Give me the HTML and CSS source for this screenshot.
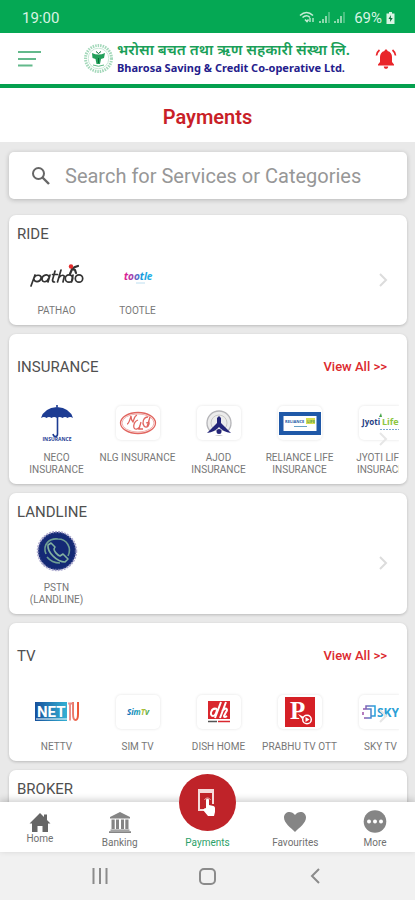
FILE: index.html
```html
<!DOCTYPE html>
<html lang="en">
<head>
<meta charset="utf-8">
<meta name="viewport" content="width=device-width, initial-scale=1">
<title>Payments</title>
<link rel="stylesheet" href="styles.css">
</head>
<body>
<div class="status">
  <span class="clock">19:00</span>
  <span class="status-right">
    <svg width="16" height="13" viewBox="0 0 16 13" fill="none" stroke="#c6edd6" stroke-width="1.6"><path d="M1 4.5Q7.500-1.500 14 4.500M3.500 6.500Q7.500 3 11 6.500M6 8.500L8 10.500 9.500 8.500"/><path d="M11 11V7M14 7v4" stroke-width="1.3"/></svg>
    <svg width="11" height="11" viewBox="0 0 11 11" fill="#8cd8ac"><path d="M0 9h2v2H0zM3 7h2v4H3zM6 4h2v7H6zM9.500 0h1v11h-1z"/></svg>
    <svg width="11" height="11" viewBox="0 0 11 11" fill="#8cd8ac"><path d="M0 9h2v2H0zM3 7h2v4H3zM6 4h2v7H6zM9.500 0h1v11h-1z"/></svg>
    <span class="battery">69%</span>
    <svg width="9" height="12" viewBox="0 0 9 12"><path fill="#d8f4e3" d="M3 0h3v1.500h2.500V12H.5V1.500H3z"/><path fill="#08743c" d="M5 3L2.500 7h1.700L4 10l2.700-4H4.800z"/></svg>
  </span>
</div>
<header class="header">
  <button class="icon-button" aria-label="Menu">
    <svg width="23" height="18" viewBox="0 0 23 18" stroke="#63b98b" stroke-width="2"><path d="M0 2h23M0 9h18M0 15.500h14.500"/></svg>
  </button>
  <div class="brand">
    <svg width="31" height="31" viewBox="0 0 31 31" fill="none">
      <circle cx="15.500" cy="15.500" r="13" stroke="#a3d8ba" stroke-width="3" stroke-dasharray="1.500 1"/>
      <circle cx="15.500" cy="15.500" r="10.300" stroke="#b9e1ca" stroke-width=".8"/>
      <path d="M9 10q6.500 3 13 0l-1 5-3 1-1 5h-3.500l-1-5-3-1z" fill="#229f5a"/>
      <path d="M13 8.500l2.500 2 2.500-2M15.500 15v5" stroke="#086b35"/>
      <path d="M10 22q5.500 2.500 11 0" stroke="#5cb985"/>
    </svg>
    <div class="brand-text">
      <span class="brand-np" lang="ne">भरोसा बचत तथा ऋण सहकारी संस्था लि.</span>
      <span class="brand-en">Bharosa Saving &amp; Credit Co-operative Ltd.</span>
    </div>
  </div>
  <button class="icon-button" aria-label="Notifications">
    <svg width="22" height="22" viewBox="0 0 22 22" fill="#e9252a"><path d="M11 1.500c1 0 1.500.7 1.500 1.500 3 .8 4.500 3 4.500 6v5l2 2.500v1H3v-1L5 14V9c0-3 1.500-5.200 4.500-6 0-.8.5-1.500 1.500-1.500zM8.800 18.500h4.400c0 1.500-1 2.300-2.200 2.300s-2.200-.8-2.200-2.300z"/><path d="M4.500 2Q2 4 1.500 7.500M17.500 2Q20 4 20.500 7.500" fill="none" stroke="#e9252a" stroke-width="1.700"/></svg>
  </button>
</header>
<h1 class="page-title">Payments</h1>
<main class="content">
  <label class="search">
    <svg width="20" height="20" viewBox="0 0 20 20" fill="none" stroke="#666" stroke-width="2"><circle cx="7.500" cy="7.500" r="5.500"/><path d="M11.500 11.500l6.500 6.500" stroke-width="2.400"/></svg>
    <input type="search" placeholder="Search for Services or Categories" aria-label="Search for Services or Categories">
  </label>

  <section class="card compact">
    <div class="card-head"><h2>RIDE</h2></div>
    <div class="services">
      <a class="service" href="#"><span class="logo">
        <svg width="54" height="26" viewBox="0 0 54 26" fill="none" stroke="#333" stroke-width="1.700" stroke-linecap="round"><path d="M1 23L5 12M4 15c1.500-4 8-3.500 7 .5s-7 4-7 .5M20 12l-2 7M19 14c-1-3.500-7-2-7 2s5 3.500 6.500-.5M25 8l-2.500 9q0 2 2 2M22.500 11.500h5M31 7l-3.500 12M29 14.500c2-3 6-3 5 0L33 19M43 12l-1.500 7"/><circle cx="39" cy="15.500" r="3.700"/><circle cx="49" cy="15.500" r="3.700"/><path d="M40 11l2-5 3 1 1 3M42 6l3-2 3-1" stroke-width="2.200"/><circle cx="41" cy="3.500" r="2.200" fill="#e32b2b" stroke="none"/></svg>
      </span><span class="name">PATHAO</span></a>
      <a class="service" href="#"><span class="logo">
        <svg width="34" height="18" viewBox="0 0 34 18"><defs><linearGradient id="tootle"><stop stop-color="#ec168c"/><stop offset=".35" stop-color="#8b4bb8"/><stop offset=".6" stop-color="#1897db"/><stop offset="1" stop-color="#28b3e8"/></linearGradient></defs><text x="3" y="13" class="mark tootle" fill="url(#tootle)">tootle</text><path d="M15 16h9" stroke="#bedff0"/></svg>
      </span><span class="name">TOOTLE</span></a>
    </div>
    <svg class="chevron" width="10" height="14" viewBox="0 0 10 14"><path d="M2 1l6 6-6 6"/></svg>
  </section>

  <section class="card">
    <div class="card-head"><h2>INSURANCE</h2><a class="view-all" href="#">View All &gt;&gt;</a></div>
    <div class="services">
      <a class="service" href="#"><span class="logo">
        <svg width="34" height="38" viewBox="0 0 34 38"><path fill="#1d3c93" d="M1 14Q4 4 17 3q13 1 16 11-3-2-5.500 0-2.500-2-5 0-3-2-5.500 0-3-2-5.500 0-2.500-2-5 0Q4 12 1 14z"/><path d="M17 3V1M17.500 13v17q0 2.500-2 2.500T13 30" fill="none" stroke="#1d3c93" stroke-width="1.600"/><text x="17" y="37" text-anchor="middle" class="mark neco">INSURANCE</text></svg>
      </span><span class="name">NECO INSURANCE</span></a>
      <a class="service" href="#"><span class="logo tile">
        <svg width="38" height="24" viewBox="0 0 38 24" fill="none" stroke="#e16660" stroke-width="1.300"><ellipse cx="19" cy="12" rx="17.500" ry="10.500"/><ellipse cx="19" cy="12" rx="16" ry="9" stroke-width=".5"/><path d="M8 13c2 0 3-5 4-8 0 3 1 5 2 6 1-2 1-6 4-7M19 9c-5 2-6 10-1 9q3-1 3-4M22 11l-2 7h4M29 6c-5 0-6 6-4 9 3 3 6-1 5-4l-3 1M31 6l-3 10"/></svg>
      </span><span class="name">NLG INSURANCE</span></a>
      <a class="service" href="#"><span class="logo tile">
        <svg width="30" height="28" viewBox="0 0 30 28"><circle cx="15" cy="14" r="12" fill="#ececec" stroke="#b4b4b8" stroke-width="1.300"/><circle cx="15" cy="14" r="8" fill="none" stroke="#c8c8c8"/><path d="M2 26h26l-4-4H6z" fill="#fff"/><path d="M3 24L13 14V9l2-2 2 2v5l10 10q-8-1-12-6-4 5-12 6z" fill="#232578"/><circle cx="15" cy="22.500" r="2.500" fill="#232578"/></svg>
      </span><span class="name">AJOD INSURANCE</span></a>
      <a class="service" href="#"><span class="logo tile">
        <svg width="42" height="23" viewBox="0 0 42 23"><path fill="#2059a8" d="M0 0h42v23H0z"/><path fill="#fff" d="M4.500 4h33v15h-33z"/><path fill="#d8df4f" d="M27 6h9v6h-9z"/><text x="6" y="11" class="mark reliance">RELIANCE</text><text x="28" y="11" class="mark reliance life">LIFE</text><path d="M15 14.500h13" stroke="#65a0c5"/></svg>
      </span><span class="name">RELIANCE LIFE INSURANCE</span></a>
      <a class="service" href="#"><span class="logo tile">
        <svg width="40" height="20" viewBox="0 0 40 20"><text x="1" y="12" class="mark jyoti">Jyoti</text><text x="21" y="12" class="mark jyoti-life">Life</text><path d="M18 4l2-4 1 4z" fill="#46a548"/><path d="M19 16.500h19" stroke="#7aa7cd" stroke-dasharray="2 1"/></svg>
      </span><span class="name cut">JYOTI LIFE INSURACE</span></a>
    </div>
    <svg class="chevron faint" width="10" height="14" viewBox="0 0 10 14"><path d="M2 1l6 6-6 6"/></svg>
  </section>

  <section class="card compact landline">
    <div class="card-head"><h2>LANDLINE</h2></div>
    <div class="services">
      <a class="service" href="#"><span class="logo">
        <svg width="42" height="42" viewBox="0 0 42 42" fill="none"><circle cx="21" cy="21" r="19" fill="#142975" stroke="#aaa7cc" stroke-width="2.500" stroke-dasharray="2 1"/><circle cx="21" cy="21" r="18" stroke="#142975"/><path d="M10 24C6 14 14 8 22 9c9 0 14 9 10 17M11 27c4 5 8 6 13 6" stroke="#6e9e92" stroke-width="1.600"/><path d="M15 13l-3 2c-1 7 9 17 17 17l3-3-5-5-3 2c-3-1-6-5-6-7l1-2z" stroke="#82b1a0" stroke-width="1.600" stroke-linejoin="round"/></svg>
      </span><span class="name">PSTN (LANDLINE)</span></a>
    </div>
    <svg class="chevron" width="10" height="14" viewBox="0 0 10 14"><path d="M2 1l6 6-6 6"/></svg>
  </section>

  <section class="card">
    <div class="card-head"><h2>TV</h2><a class="view-all" href="#">View All &gt;&gt;</a></div>
    <div class="services">
      <a class="service" href="#"><span class="logo">
        <svg width="44" height="20" viewBox="0 0 44 20"><defs><linearGradient id="net"><stop stop-color="#17519c"/><stop offset="1" stop-color="#34b1d4"/></linearGradient><linearGradient id="tv"><stop stop-color="#e9a3a8"/><stop offset="1" stop-color="#ec5636"/></linearGradient></defs><path fill="url(#net)" d="M0 0h32v19H0z"/><path fill="#fff" d="M1 16.500h31v1H1z"/><text x="2" y="15" class="mark net">NET</text><path d="M33 1.500h5M35 1.500v17M38 0v12q0 6 2.500 6 2.500 0 2.500-6V0" fill="none" stroke="url(#tv)" stroke-width="2"/></svg>
      </span><span class="name">NETTV</span></a>
      <a class="service" href="#"><span class="logo tile">
        <svg width="24" height="12" viewBox="0 0 24 12"><defs><linearGradient id="sim"><stop stop-color="#1569b5"/><stop offset=".5" stop-color="#16a0bb"/><stop offset=".7" stop-color="#c0c12a"/><stop offset="1" stop-color="#159b67"/></linearGradient></defs><text x="1" y="9" class="mark sim" fill="url(#sim)">SimTv</text></svg>
      </span><span class="name">SIM TV</span></a>
      <a class="service" href="#"><span class="logo tile">
        <svg width="24" height="24" viewBox="0 0 24 24"><path fill="#d9272e" d="M1 1h22v18H1z"/><path d="M14 2L8 18M10 9c-6-2-8 7-4 7 2 0 4-4 4-7M19 2l-6 16M15 11c5-5 6-1 4 1l-2 4q0 2 3 0" fill="none" stroke="#fff" stroke-width="2"/><path d="M1 21.500h9" stroke="#555" stroke-width="1.500"/><path d="M11 21.500h12" stroke="#d9272e" stroke-width="1.500"/></svg>
      </span><span class="name">DISH HOME</span></a>
      <a class="service" href="#"><span class="logo tile">
        <svg width="30" height="30" viewBox="0 0 30 30"><path fill="#d52026" d="M0 0h30v30H0z"/><text x="5" y="22" class="mark prabhu">P</text><circle cx="22" cy="22.500" r="4.300" fill="#d52026" stroke="#fff" stroke-width="1.500"/><path d="M20.500 20l4 2.500-4 2.500zM13 17l6 3-2 2z" fill="#fff"/></svg>
      </span><span class="name">PRABHU TV OTT</span></a>
      <a class="service" href="#"><span class="logo tile">
        <svg width="42" height="16" viewBox="0 0 42 16"><defs><linearGradient id="sky"><stop stop-color="#a04fa7"/><stop offset="1" stop-color="#20a5df"/></linearGradient></defs><path d="M3 5h8v9H4M6 5V2h9v10h-4M3 8v3" fill="none" stroke="url(#sky)" stroke-width="1.500"/><text x="17" y="13" class="mark sky">SKY</text></svg>
      </span><span class="name">SKY TV</span></a>
    </div>
    <svg class="chevron faint" width="10" height="14" viewBox="0 0 10 14"><path d="M2 1l6 6-6 6"/></svg>
  </section>

  <section class="card compact"><div class="card-head"><h2>BROKER</h2></div><div class="services"></div></section>
</main>
<nav class="tabs">
  <a class="tab home" href="#"><svg width="22" height="20" viewBox="0 0 22 20" fill="#666"><path d="M11 0l4 4V1.500h3V7l3.500 3.500H19V19h-5.500v-6h-5v6H3v-8.500H.5z"/></svg><span>Home</span></a>
  <a class="tab" href="#"><svg width="22" height="21" viewBox="0 0 22 21" fill="#858585"><path d="M11 0l10 5v1.500H1V5zM2.500 7.500h3.200V17H2.500zM7 7.500h3V17H7zM12 7.500h3V17h-3zM16.300 7.500h3.200V17h-3.200zM1.500 17.500h19v1.300h-19zM0 19.300h22V21H0z"/></svg><span>Banking</span></a>
  <a class="tab pay" href="#"><span class="pay-disc"><svg width="20" height="30" viewBox="0 0 20 30"><path d="M9 22H2V2h14v14" fill="none" stroke="#f5dada" stroke-width="2"/><path d="M2 4h14" stroke="#f5dada" stroke-width="2"/><path d="M9 20v-8q0-1.500 1.500-1.500T12 12v5l4.500 1q1.500.5 1.500 2v4l-1 4h-6l-5-6q1-2 3-2z" fill="#fff"/><path d="M7.500 12a3.200 3.200 0 0 1 6 0" fill="none" stroke="#e9a9aa"/></svg></span><span>Payments</span></a>
  <a class="tab" href="#"><svg width="24" height="22" viewBox="0 0 24 22" fill="#858585"><path d="M12 21C7.500 16.500 1 12 1 6.500 1 .5 8.500-1 12 4c3.500-5 11-3.500 11 2.500 0 5.500-6.500 10-11 14.500z"/></svg><span>Favourites</span></a>
  <a class="tab" href="#"><svg width="24" height="23" viewBox="0 0 24 23"><circle cx="12" cy="11.500" r="11.300" fill="#858585"/><g fill="#fff"><circle cx="6" cy="11.500" r="2"/><circle cx="12" cy="11.500" r="2"/><circle cx="18" cy="11.500" r="2"/></g></svg><span>More</span></a>
</nav>
<div class="system">
  <button aria-label="Recent apps"><svg width="16" height="16" viewBox="0 0 16 16" stroke="#8b8b8b" stroke-width="2"><path d="M1.500 0v16M8 0v16M14.500 0v16"/></svg></button>
  <button aria-label="Home screen"><svg width="17" height="17" viewBox="0 0 17 17" fill="none" stroke="#8b8b8b" stroke-width="2"><rect x="1" y="1" width="15" height="15" rx="4"/></svg></button>
  <button aria-label="Back"><svg width="10" height="16" viewBox="0 0 10 16" fill="none" stroke="#8b8b8b" stroke-width="2"><path d="M9 1L2 8l7 7"/></svg></button>
</div>
</body>
</html>
```
FILE: styles.css
```css
* { box-sizing: border-box; }
body {
  margin: 0;
  height: 100vh;
  display: flex;
  flex-direction: column;
  background: #e9e9e9;
  color: #444;
  font-family: Roboto, "Noto Sans", sans-serif;
}
a { color: inherit; text-decoration: none; }
svg { display: block; flex: none; }
button { padding: 0; border: 0; background: none; }
h1, h2 { margin: 0; }

.status {
  flex: none;
  height: 33px;
  padding: 2px 20px 0 22px;
  display: flex;
  align-items: center;
  justify-content: space-between;
  background: #05a854;
  color: #d8f4e3;
  font-size: 15px;
}
.status-right { display: flex; align-items: center; gap: 4px; }
.battery { margin-left: 5px; }

.header {
  flex: none;
  height: 55px;
  padding: 0 18px;
  display: flex;
  align-items: center;
  background: #fff;
  border-bottom: 4px solid #05a04f;
}
.icon-button { flex: none; }
.brand {
  margin: 0 25px 0 auto;
  display: flex;
  align-items: center;
  gap: 3px;
}
.brand-text { display: flex; flex-direction: column; white-space: nowrap; }
.brand-np {
  color: #1a9f58;
  font: 600 15px/19px "Noto Sans Devanagari", "Noto Sans", sans-serif;
}
.brand-en {
  color: #24208c;
  font: 700 11px/14px "Noto Sans", sans-serif;
}

.page-title {
  flex: none;
  padding: 17px 0 13px;
  background: #fff;
  color: #c91f28;
  text-align: center;
  font-size: 20px;
  line-height: 24px;
  font-weight: 600;
}

.content {
  flex: 1;
  min-height: 0;
  overflow: hidden;
  padding: 10px 8px 0 9px;
  display: flex;
  flex-direction: column;
  gap: 9px;
}
.search {
  flex: none;
  height: 47px;
  margin-bottom: 7px;
  padding: 0 8px 0 22px;
  display: flex;
  align-items: center;
  gap: 14px;
  background: #fff;
  border-radius: 5px;
  box-shadow: 0 1px 5px rgba(0, 0, 0, .22);
}
.search input {
  flex: 1;
  min-width: 0;
  padding: 0;
  border: 0;
  outline: 0;
  background: none;
  color: #444;
  font: 20px/24px Roboto, sans-serif;
}
.search input::placeholder { color: #979797; opacity: 1; }

.card {
  flex: none;
  position: relative;
  padding: 23px 8px 8px 7px;
  background: #fff;
  border-radius: 7px;
  box-shadow: 0 1px 3px rgba(0, 0, 0, .2);
}
.card.compact { padding-top: 9px; }
.card-head {
  padding: 0 12px 0 1px;
  display: flex;
  justify-content: space-between;
  align-items: center;
  line-height: 20px;
}
.card h2 { color: #505050; font-size: 15px; font-weight: 400; }
.view-all { color: #dc2a2e; font-size: 13px; font-weight: 500; }
.services { display: flex; margin-top: 26px; overflow: hidden; }
.compact .services { margin-top: 12px; }
.landline .services { margin-top: 9px; }
.service {
  flex: 0 0 81px;
  display: flex;
  flex-direction: column;
  align-items: center;
  gap: 9px;
}
.landline .service { gap: 11px; }
.logo {
  width: 56px;
  height: 40px;
  display: flex;
  align-items: center;
  justify-content: center;
}
.tile {
  width: 44px;
  height: 34px;
  margin: 3px 0;
  border-radius: 5px;
  box-shadow: 0 0 3px rgba(0, 0, 0, .12);
}
.name {
  max-width: 80px;
  color: #777;
  text-align: center;
  font-size: 10px;
  line-height: 12px;
}
.cut { padding: 0 4px; }
.chevron {
  position: absolute;
  right: 19px;
  bottom: 38px;
  fill: none;
  stroke: #dcdcdc;
  stroke-width: 2;
}
.chevron.faint { stroke: #e6e6e6; }
.landline .chevron { bottom: 44px; }

.mark { font-family: "Open Sans", sans-serif; font-weight: 700; }
.tootle { font-size: 10px; font-style: italic; }
.neco { font-size: 5px; fill: #1d3c93; }
.reliance { font-size: 4px; fill: #2059a8; }
.life { fill: #5a9b55; }
.jyoti { font-size: 8px; fill: #263e83; }
.jyoti-life { font-size: 9px; fill: #8cc63f; }
.net { font-family: Roboto, sans-serif; font-size: 15px; fill: #fff; }
.sim { font-size: 8px; font-style: italic; }
.prabhu { font-family: "Liberation Serif", serif; font-size: 25px; fill: #fff; }
.sky { font-size: 12px; fill: #2a9fd6; }

.tabs {
  flex: none;
  position: relative;
  height: 50px;
  display: grid;
  grid-template-columns: 5fr 5fr 6fr 5fr 5fr;
  align-items: end;
  padding-bottom: 3px;
  background: #fff;
  box-shadow: 0 -2px 7px rgba(0, 0, 0, .2);
}
.tab {
  display: flex;
  flex-direction: column;
  align-items: center;
  gap: 4px;
  color: #707070;
  font-size: 10px;
  line-height: 12px;
}
.home { padding-bottom: 4px; gap: 0; }
.pay { color: #2b9f69; }
.pay-disc {
  width: 57px;
  height: 57px;
  margin: -36px 0 2px;
  display: flex;
  align-items: center;
  justify-content: center;
  border-radius: 50%;
  background: #bf2329;
}

.system {
  flex: none;
  height: 48px;
  padding: 0 46px;
  display: grid;
  grid-template-columns: repeat(3, 1fr);
  justify-items: center;
  align-items: center;
  background: #f1f1f1;
}
```
